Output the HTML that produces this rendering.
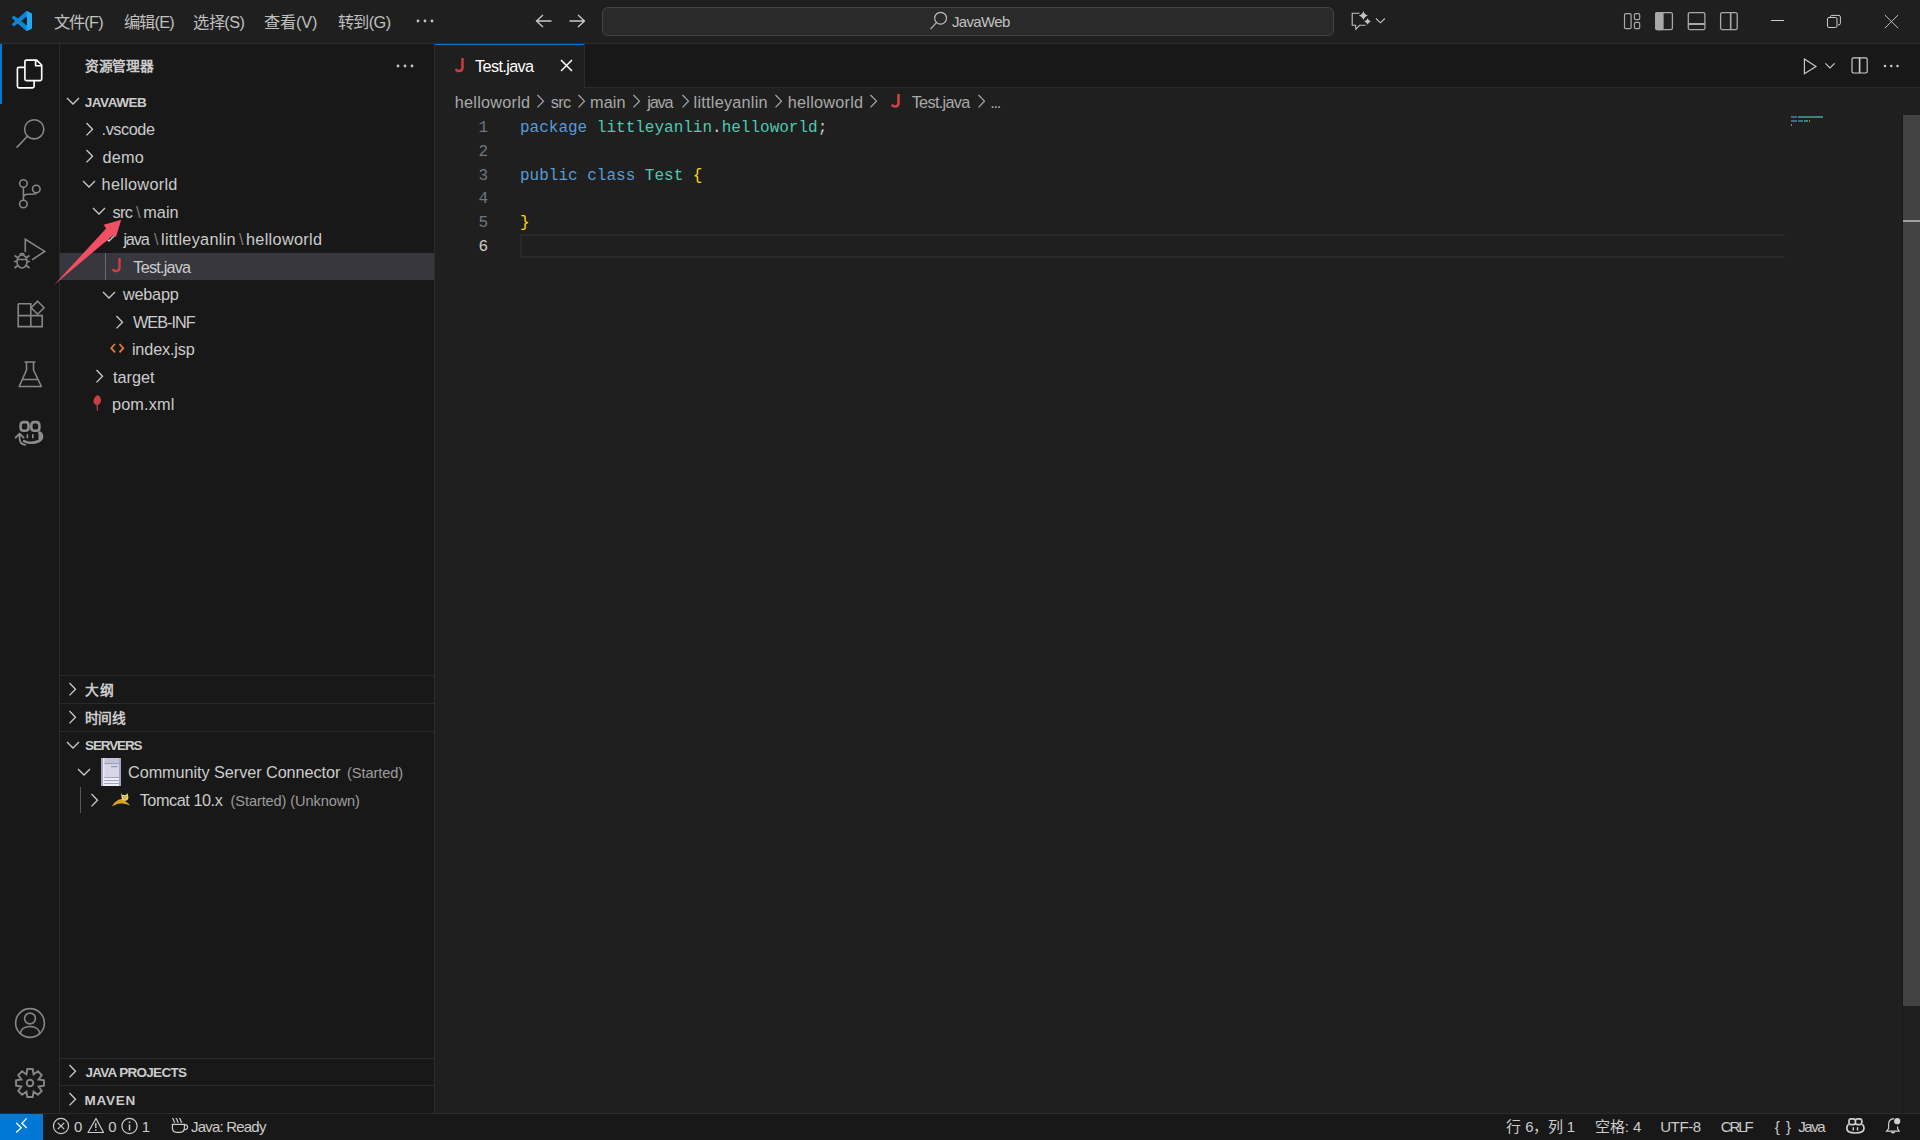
<!DOCTYPE html>
<html lang="zh-CN">
<head>
<meta charset="utf-8">
<style>
html,body{margin:0;padding:0;}
body{width:1920px;height:1140px;overflow:hidden;position:relative;background:#1f1f1f;font-family:"Liberation Sans",sans-serif;color:#cccccc;}
.a{position:absolute;}
.t{position:absolute;white-space:pre;font-family:"Liberation Sans",sans-serif;}
.mono{font-family:"Liberation Mono",monospace;}
svg{position:absolute;overflow:visible;}
</style>
</head>
<body>
<!-- title bar -->
<div class="a" style="left:0;top:0;width:1920px;height:43px;background:#1f1f1f"></div>
<div class="a" style="left:0;top:43px;width:1920px;height:1px;background:#2b2b2b"></div>
<!-- activity bar -->
<div class="a" style="left:0;top:44px;width:59px;height:1069px;background:#181818"></div>
<div class="a" style="left:59px;top:44px;width:1px;height:1069px;background:#2b2b2b"></div>
<div class="a" style="left:0;top:44px;width:2px;height:60px;background:#0078d4"></div>
<!-- sidebar -->
<div class="a" style="left:60px;top:44px;width:374px;height:1069px;background:#181818"></div>
<div class="a" style="left:434px;top:44px;width:1px;height:1069px;background:#2b2b2b"></div>
<!-- selected row -->
<div class="a" style="left:60px;top:253px;width:374px;height:27px;background:#37373d"></div>
<div class="a" style="left:105px;top:253px;width:1px;height:27px;background:#6b6b6b"></div>
<!-- section borders -->
<div class="a" style="left:60px;top:675px;width:374px;height:1px;background:#2b2b2b"></div>
<div class="a" style="left:60px;top:703px;width:374px;height:1px;background:#2b2b2b"></div>
<div class="a" style="left:60px;top:731px;width:374px;height:1px;background:#2b2b2b"></div>
<div class="a" style="left:60px;top:1058px;width:374px;height:1px;background:#2b2b2b"></div>
<div class="a" style="left:60px;top:1085px;width:374px;height:1px;background:#2b2b2b"></div>
<div class="a" style="left:80px;top:787px;width:1px;height:26px;background:#585858"></div>
<!-- tab bar -->
<div class="a" style="left:435px;top:44px;width:1485px;height:43px;background:#181818"></div>
<div class="a" style="left:435px;top:87px;width:1485px;height:1px;background:#2b2b2b"></div>
<div class="a" style="left:435px;top:44px;width:149px;height:44px;background:#1f1f1f"></div>
<div class="a" style="left:435px;top:44px;width:149px;height:1px;background:#0078d4"></div>
<div class="a" style="left:584px;top:44px;width:1px;height:43px;background:#2b2b2b"></div>
<!-- status bar -->
<div class="a" style="left:0;top:1113px;width:1920px;height:27px;background:#181818"></div>
<div class="a" style="left:0;top:1113px;width:1920px;height:1px;background:#2b2b2b"></div>
<div class="a" style="left:0;top:1114px;width:43px;height:26px;background:#0078d4"></div>
<!-- command center -->
<div class="a" style="left:602px;top:7px;width:730px;height:27px;background:#2a2a2a;border:1px solid #444444;border-radius:6px"></div>
<!-- editor -->
<div class="a" style="left:520px;top:234px;width:1263px;height:20px;border:2px solid #282828;border-right:none"></div>
<!-- scrollbar -->
<div class="a" style="left:1903px;top:115px;width:17px;height:891px;background:#434343"></div>
<div class="a" style="left:1903px;top:220px;width:17px;height:2px;background:#a0a0a0"></div>
<div class="a" style="left:1902px;top:115px;width:1px;height:998px;background:#171717"></div>

<!-- code -->
<div class="t mono" style="left:478px;top:117px;font-size:16px;line-height:23.75px;color:#6e7681;text-align:right;width:10px">1<br>2<br>3<br>4<br>5<br><span style="color:#cccccc">6</span></div>
<div class="t mono" style="left:520px;top:117px;font-size:16px;line-height:23.75px;color:#cccccc"><span style="color:#569cd6">package</span> <span style="color:#4ec9b0">littleyanlin</span>.<span style="color:#4ec9b0">helloworld</span>;<br><br><span style="color:#569cd6">public</span> <span style="color:#569cd6">class</span> <span style="color:#4ec9b0">Test</span> <span style="color:#ffd700">{</span><br><br><span style="color:#ffd700">}</span><br></div>
<!-- minimap -->
<div class="a" style="left:1791px;top:116px;width:40px;height:10px;opacity:0.6">
<div class="a" style="left:0;top:0;width:6px;height:2px;background:#569cd6"></div>
<div class="a" style="left:7px;top:0;width:25px;height:2px;background:#4ec9b0"></div>
<div class="a" style="left:0;top:4px;width:6px;height:2px;background:#569cd6"></div>
<div class="a" style="left:7px;top:4px;width:5px;height:2px;background:#569cd6"></div>
<div class="a" style="left:13px;top:4px;width:4px;height:2px;background:#4ec9b0"></div>
<div class="a" style="left:18px;top:4px;width:1px;height:2px;background:#ffd700"></div>
<div class="a" style="left:0;top:8px;width:1px;height:2px;background:#cccccc"></div>
</div>
<span id="m1" class="t" style="left:53.60px;top:11.50px;font-size:16.25px;line-height:20px;letter-spacing:-0.650px;color:#c0c0c0;font-weight:400;">文件(F)</span>
<span id="m2" class="t" style="left:124.00px;top:11.50px;font-size:16.25px;line-height:20px;letter-spacing:-0.750px;color:#c0c0c0;font-weight:400;">编辑(E)</span>
<span id="m3" class="t" style="left:193.20px;top:11.50px;font-size:16.25px;line-height:20px;letter-spacing:-0.475px;color:#c0c0c0;font-weight:400;">选择(S)</span>
<span id="m4" class="t" style="left:264.30px;top:11.50px;font-size:16.25px;line-height:20px;letter-spacing:-0.125px;color:#c0c0c0;font-weight:400;">查看(V)</span>
<span id="m5" class="t" style="left:337.75px;top:11.50px;font-size:16.25px;line-height:20px;letter-spacing:-0.537px;color:#c0c0c0;font-weight:400;">转到(G)</span>
<span id="cc" class="t" style="left:952.00px;top:12.00px;font-size:15px;line-height:19px;letter-spacing:-0.667px;color:#c2c2c2;font-weight:400;">JavaWeb</span>
<span id="sbt" class="t" style="left:84.75px;top:57.50px;font-size:13.75px;line-height:17px;letter-spacing:-0.188px;color:#cccccc;font-weight:700;">资源管理器</span>
<span id="jw" class="t" style="left:84.75px;top:94.40px;font-size:13.5px;line-height:17px;letter-spacing:-0.458px;color:#cccccc;font-weight:700;">JAVAWEB</span>
<span id="t1" class="t" style="left:101.60px;top:119.00px;font-size:16.25px;line-height:20px;letter-spacing:-0.433px;color:#cccccc;font-weight:400;">.vscode</span>
<span id="t2" class="t" style="left:102.60px;top:146.80px;font-size:16.25px;line-height:20px;letter-spacing:0.200px;color:#cccccc;font-weight:400;">demo</span>
<span id="t3" class="t" style="left:101.60px;top:174.10px;font-size:16.25px;line-height:20px;letter-spacing:0.289px;color:#cccccc;font-weight:400;">helloworld</span>
<span id="t4a" class="t" style="left:112.50px;top:202.20px;font-size:16.25px;line-height:20px;letter-spacing:-0.600px;color:#cccccc;font-weight:400;">src</span>
<span id="t4b" class="t" style="left:136.00px;top:202.20px;font-size:16.25px;line-height:20px;letter-spacing:0.000px;color:#7a7a7a;font-weight:400;">\</span>
<span id="t4c" class="t" style="left:143.20px;top:202.20px;font-size:16.25px;line-height:20px;letter-spacing:0.067px;color:#cccccc;font-weight:400;">main</span>
<span id="t5a" class="t" style="left:123.40px;top:229.00px;font-size:16.25px;line-height:20px;letter-spacing:-1.133px;color:#cccccc;font-weight:400;">java</span>
<span id="t5b" class="t" style="left:154.00px;top:229.00px;font-size:16.25px;line-height:20px;letter-spacing:0.000px;color:#7a7a7a;font-weight:400;">\</span>
<span id="t5c" class="t" style="left:161.00px;top:229.00px;font-size:16.25px;line-height:20px;letter-spacing:0.291px;color:#cccccc;font-weight:400;">littleyanlin</span>
<span id="t5d" class="t" style="left:239.00px;top:229.00px;font-size:16.25px;line-height:20px;letter-spacing:0.000px;color:#7a7a7a;font-weight:400;">\</span>
<span id="t5e" class="t" style="left:246.00px;top:229.00px;font-size:16.25px;line-height:20px;letter-spacing:0.311px;color:#cccccc;font-weight:400;">helloworld</span>
<span id="t6" class="t" style="left:133.30px;top:256.90px;font-size:16.25px;line-height:20px;letter-spacing:-0.788px;color:#cccccc;font-weight:400;">Test.java</span>
<span id="t7" class="t" style="left:123.00px;top:284.00px;font-size:16.25px;line-height:20px;letter-spacing:-0.240px;color:#cccccc;font-weight:400;">webapp</span>
<span id="t8" class="t" style="left:132.90px;top:311.70px;font-size:16.25px;line-height:20px;letter-spacing:-0.950px;color:#cccccc;font-weight:400;">WEB-INF</span>
<span id="t9" class="t" style="left:131.90px;top:338.50px;font-size:16.25px;line-height:20px;letter-spacing:-0.150px;color:#cccccc;font-weight:400;">index.jsp</span>
<span id="t10" class="t" style="left:113.00px;top:367.20px;font-size:16.25px;line-height:20px;letter-spacing:0.000px;color:#cccccc;font-weight:400;">target</span>
<span id="t11" class="t" style="left:112.00px;top:394.00px;font-size:16.25px;line-height:20px;letter-spacing:0.150px;color:#cccccc;font-weight:400;">pom.xml</span>
<span id="dg" class="t" style="left:84.80px;top:682.00px;font-size:13.75px;line-height:17px;letter-spacing:0.800px;color:#cccccc;font-weight:700;">大纲</span>
<span id="sjx" class="t" style="left:84.80px;top:709.50px;font-size:13.75px;line-height:17px;letter-spacing:-0.400px;color:#cccccc;font-weight:700;">时间线</span>
<span id="srv" class="t" style="left:85.00px;top:736.60px;font-size:13.5px;line-height:17px;letter-spacing:-1.117px;color:#cccccc;font-weight:700;">SERVERS</span>
<span id="csc" class="t" style="left:128.00px;top:762.00px;font-size:16.25px;line-height:20px;letter-spacing:-0.064px;color:#cccccc;font-weight:400;">Community Server Connector</span>
<span id="csc2" class="t" style="left:347.00px;top:764.00px;font-size:14.6px;line-height:18px;letter-spacing:-0.075px;color:#9d9d9d;font-weight:400;">(Started)</span>
<span id="tc" class="t" style="left:139.70px;top:790.00px;font-size:16.25px;line-height:20px;letter-spacing:-0.450px;color:#cccccc;font-weight:400;">Tomcat 10.x</span>
<span id="tc2" class="t" style="left:230.60px;top:792.00px;font-size:14.6px;line-height:18px;letter-spacing:-0.111px;color:#9d9d9d;font-weight:400;">(Started) (Unknown)</span>
<span id="jp" class="t" style="left:85.40px;top:1063.70px;font-size:13.5px;line-height:17px;letter-spacing:-0.700px;color:#cccccc;font-weight:700;">JAVA PROJECTS</span>
<span id="mv" class="t" style="left:84.40px;top:1091.80px;font-size:13.5px;line-height:17px;letter-spacing:0.750px;color:#cccccc;font-weight:700;">MAVEN</span>
<span id="tab" class="t" style="left:475.00px;top:55.90px;font-size:16.25px;line-height:20px;letter-spacing:-0.625px;color:#ffffff;font-weight:400;">Test.java</span>
<span id="b1" class="t" style="left:454.80px;top:91.75px;font-size:16.25px;line-height:20px;letter-spacing:0.244px;color:#a9a9a9;font-weight:400;">helloworld</span>
<span id="b2" class="t" style="left:550.80px;top:91.75px;font-size:16.25px;line-height:20px;letter-spacing:-0.700px;color:#a9a9a9;font-weight:400;">src</span>
<span id="b3" class="t" style="left:590.10px;top:91.75px;font-size:16.25px;line-height:20px;letter-spacing:0.033px;color:#a9a9a9;font-weight:400;">main</span>
<span id="b4" class="t" style="left:647.20px;top:91.75px;font-size:16.25px;line-height:20px;letter-spacing:-1.133px;color:#a9a9a9;font-weight:400;">java</span>
<span id="b5" class="t" style="left:693.60px;top:91.75px;font-size:16.25px;line-height:20px;letter-spacing:0.236px;color:#a9a9a9;font-weight:400;">littleyanlin</span>
<span id="b6" class="t" style="left:787.80px;top:91.75px;font-size:16.25px;line-height:20px;letter-spacing:0.244px;color:#a9a9a9;font-weight:400;">helloworld</span>
<span id="b7" class="t" style="left:911.70px;top:91.75px;font-size:16.25px;line-height:20px;letter-spacing:-0.688px;color:#a9a9a9;font-weight:400;">Test.java</span>
<span id="b8" class="t" style="left:990.20px;top:91.75px;font-size:16.25px;line-height:20px;letter-spacing:-1.200px;color:#a9a9a9;font-weight:400;">...</span>
<span id="s0a" class="t" style="left:74.00px;top:1117.20px;font-size:15px;line-height:19px;letter-spacing:-0.200px;color:#cccccc;font-weight:400;">0</span>
<span id="s0b" class="t" style="left:108.30px;top:1117.20px;font-size:15px;line-height:19px;letter-spacing:-0.300px;color:#cccccc;font-weight:400;">0</span>
<span id="s1" class="t" style="left:141.70px;top:1117.20px;font-size:15px;line-height:19px;letter-spacing:-0.700px;color:#cccccc;font-weight:400;">1</span>
<span id="sjr" class="t" style="left:191.00px;top:1117.20px;font-size:15px;line-height:19px;letter-spacing:-0.800px;color:#cccccc;font-weight:400;">Java: Ready</span>
<span id="sln" class="t" style="left:1506.40px;top:1117.20px;font-size:15px;line-height:19px;letter-spacing:-0.200px;color:#cccccc;font-weight:400;">行 6，列 1</span>
<span id="ssp" class="t" style="left:1594.80px;top:1117.20px;font-size:15px;line-height:19px;letter-spacing:-0.025px;color:#cccccc;font-weight:400;">空格: 4</span>
<span id="sut" class="t" style="left:1660.20px;top:1117.20px;font-size:15px;line-height:19px;letter-spacing:-0.400px;color:#cccccc;font-weight:400;">UTF-8</span>
<span id="scr" class="t" style="left:1720.80px;top:1117.20px;font-size:15px;line-height:19px;letter-spacing:-2.133px;color:#cccccc;font-weight:400;">CRLF</span>
<span id="sbr" class="t" style="left:1774.70px;top:1117.20px;font-size:15px;line-height:19px;letter-spacing:1.050px;color:#cccccc;font-weight:400;">{ }</span>
<span id="sjv" class="t" style="left:1798.30px;top:1117.20px;font-size:15px;line-height:19px;letter-spacing:-1.467px;color:#cccccc;font-weight:400;">Java</span>

<!-- ICONS -->
<!-- vscode logo -->
<svg style="left:12px;top:11px" width="20" height="20" viewBox="0 0 100 100">
  <defs><clipPath id="vsc"><path d="M96.46 10.8 L75.86 0.87 a6.23 6.23 0 0 0 -7.11 1.21 L29.33 38.04 L12.15 25 a4.16 4.16 0 0 0 -5.32 .24 L1.32 30.25 a4.17 4.17 0 0 0 0 6.16 L16.22 50 L1.32 63.59 a4.17 4.17 0 0 0 0 6.16 l5.51 5 a4.16 4.16 0 0 0 5.32 .24 l17.18 -13.04 l39.42 35.96 a6.22 6.22 0 0 0 7.11 1.21 l20.6 -9.92 a6.25 6.25 0 0 0 3.54 -5.63 V16.43 a6.25 6.25 0 0 0 -3.54 -5.63 Z M75 72.7 L45.11 50 L75 27.3 Z"/></clipPath></defs>
  <g clip-path="url(#vsc)"><rect x="0" y="0" width="100" height="100" fill="#0a85d9"/><rect x="73" y="0" width="30" height="100" fill="#23a9f2"/><path d="M0 30 L75 87 L75 100 L0 45 Z" fill="#0e8fe0" opacity="0.5"/></g>
</svg>
<!-- ellipsis menu -->
<svg style="left:416px;top:19px" width="18" height="4"><circle cx="2" cy="2" r="1.4" fill="#c4c4c4"/><circle cx="9" cy="2" r="1.4" fill="#c4c4c4"/><circle cx="16" cy="2" r="1.4" fill="#c4c4c4"/></svg>
<!-- nav arrows -->
<svg style="left:534px;top:13px" width="20" height="16" viewBox="0 0 20 16" fill="none" stroke="#cccccc" stroke-width="1.3"><path d="M9 2 L2.5 8 L9 14 M2.5 8 H17.5"/></svg>
<svg style="left:567px;top:13px" width="20" height="16" viewBox="0 0 20 16" fill="none" stroke="#cccccc" stroke-width="1.3"><path d="M11 2 L17.5 8 L11 14 M17.5 8 H2.5"/></svg>
<!-- search icon in command center -->
<svg style="left:920px;top:0" width="30" height="40" viewBox="920 0 30 40" fill="none" stroke="#bdbdbd" stroke-width="1.15"><circle cx="940.6" cy="18.2" r="5.9"/><path d="M936.4 22.6 L930.6 29.2"/></svg>
<!-- copilot chat icon -->
<svg style="left:1340px;top:0" width="60" height="44" viewBox="1340 0 60 44" fill="none" stroke="#c4c4c4" stroke-width="1.1"><path d="M1359.5 13.2 H1352.2 V25.3 H1355.6 L1355.9 29.3 L1359.6 25.3 H1365.5"/><path d="M1363.4 10.9 Q1364.412 14.488 1368.0 15.5 Q1364.412 16.512 1363.4 20.1 Q1362.3880000000001 16.512 1358.8000000000002 15.5 Q1362.3880000000001 14.488 1363.4 10.9 Z" fill="#c4c4c4" stroke="none"/><path d="M1367.6 18.2 Q1368.326 20.774 1370.8999999999999 21.5 Q1368.326 22.226 1367.6 24.8 Q1366.8739999999998 22.226 1364.3 21.5 Q1366.8739999999998 20.774 1367.6 18.2 Z" fill="#c4c4c4" stroke="none"/><path d="M1376 18.5 L1380.4 22.8 L1384.8 18.5"/></svg>
<!-- layout icons -->
<svg style="left:1622px;top:11px" width="20" height="20" viewBox="0 0 20 20" fill="none" stroke="#a8a8a8" stroke-width="1.2">
  <rect x="2.5" y="2.6" width="6.6" height="15" rx="1.3"/><rect x="12.4" y="2.6" width="5.3" height="6" rx="1.3"/><rect x="12.4" y="11.4" width="5.3" height="6.2" rx="1.3"/></svg>
<svg style="left:1654px;top:11px" width="20" height="20" viewBox="0 0 20 20" fill="none" stroke="#a8a8a8" stroke-width="1.3">
  <rect x="1.8" y="1.6" width="16.6" height="17" rx="1.6"/><rect x="1.8" y="1.6" width="7.2" height="17" rx="1" fill="#a8a8a8"/></svg>
<svg style="left:1687px;top:11px" width="20" height="20" viewBox="0 0 20 20" fill="none" stroke="#a8a8a8" stroke-width="1.3">
  <rect x="1.3" y="1.6" width="16.6" height="17" rx="1.6"/><path d="M1.3 13 H17.9" stroke-width="2"/></svg>
<svg style="left:1719px;top:11px" width="20" height="20" viewBox="0 0 20 20" fill="none" stroke="#a8a8a8" stroke-width="1.3">
  <rect x="1.6" y="1.6" width="16.6" height="17" rx="1.6"/><path d="M11.7 1.6 V18.6" stroke-width="1.6"/></svg>
<!-- window controls -->
<div class="a" style="left:1771px;top:20px;width:13px;height:1px;background:#cccccc"></div>
<svg style="left:1826px;top:13px" width="16" height="16" viewBox="0 0 16 16" fill="none" stroke="#cccccc" stroke-width="1"><rect x="1.5" y="4.5" width="9.5" height="10" rx="1.5"/><path d="M4.3 3.9 A1.5 1.5 0 0 1 5.8 2.4 H12.9 A1.5 1.5 0 0 1 14.4 3.9 V10.3 A1.5 1.5 0 0 1 12.9 11.8 H12"/></svg>
<svg style="left:1884px;top:14px" width="15" height="15" viewBox="0 0 15 15" fill="none" stroke="#c8c8c8" stroke-width="0.95"><path d="M0.9 1 L14.1 14.2 M14.1 1 L0.9 14.2"/></svg>

<!-- activity bar icons -->
<svg style="left:12px;top:55px" width="36" height="36" viewBox="0 0 36 36" fill="none" stroke="#ffffff" stroke-width="1.65" stroke-linejoin="round"><path d="M14.4 5.05 H24.6 L29.7 10 V24.1 Q29.7 25.6 28.2 25.6 H14.4 Q12.9 25.6 12.9 24.1 V6.55 Q12.9 5.05 14.4 5.05 Z"/><path d="M23.6 5.3 V10.7 H29.5"/><path d="M12.9 12.3 H6.9 Q5.4 12.3 5.4 13.8 V31.3 Q5.4 32.8 6.9 32.8 H20.6 Q22.1 32.8 22.1 31.3 V25.6"/></svg>
<svg style="left:0;top:104px" width="60" height="60" viewBox="0 104 60 60" fill="none" stroke="#868686" stroke-width="1.6"><circle cx="34.2" cy="129.3" r="9.6"/><path d="M27.4 136.2 L16.6 147.6"/></svg>
<svg style="left:15px;top:178px" width="30" height="32" viewBox="0 0 30 32" fill="none" stroke="#868686" stroke-width="1.6"><circle cx="8.4" cy="5.5" r="3.8"/><circle cx="8.4" cy="26" r="3.8"/><circle cx="21.3" cy="11" r="3.8"/><path d="M8.4 9.3 V22.2 M8.4 19.5 Q8.4 16.2 13 16.2 H17 Q21.3 16.2 21.3 14.8"/></svg>
<svg style="left:14px;top:238px" width="34" height="34" viewBox="0 0 34 34" fill="none" stroke="#868686" stroke-width="1.6"><path d="M11.3 14 V1.3 L30.7 13.4 L18 21.8"/><ellipse cx="8" cy="23.5" rx="5" ry="6.5"/><path d="M3 21.5 H13 M0.5 17.5 L3.5 19.5 M15.5 17.5 L12.5 19.5 M0 23.5 H3 M13 23.5 H16 M0.5 30 L3.8 27.5 M15.5 30 L12.2 27.5 M5.5 16.5 Q8 14.5 10.5 16.5"/></svg>
<svg style="left:16px;top:300px" width="30" height="30" viewBox="0 0 30 30" fill="none" stroke="#868686" stroke-width="1.6"><path d="M2.2 3.7 H14.8 V15.6 M2.2 3.7 V26.6 H26.2 V15.6 H2.2 M14.8 15.6 V26.6"/><path d="M21.6 1.2 L28.1 7.7 L21.6 14.2 L15.1 7.7 Z"/></svg>
<svg style="left:17px;top:360px" width="28" height="30" viewBox="0 0 28 30" fill="none" stroke="#868686" stroke-width="1.6" stroke-linejoin="round"><path d="M7.5 2 H18.5 M9.5 2 V10 L2.2 26.5 H24.4 L16.5 10 V2 M5.5 19.5 H20.9"/></svg>
<svg style="left:12px;top:416px" width="36" height="36" viewBox="0 0 36 36" fill="none" stroke="#8c8c8c" stroke-width="2.6" stroke-linecap="round" stroke-linejoin="round"><path d="M11.5 6.1 H14 Q16.5 6.1 16.5 9.5 V11.8 Q16.5 14.8 13.2 14.8 H11.5 Q8.6 14.8 8.6 11.8 V9.5 Q8.6 6.1 11.5 6.1 Z"/><path d="M22 6.1 H24.5 Q27.4 6.1 27.4 9.5 V11.8 Q27.4 14.8 24.5 14.8 H22.5 Q19.3 14.8 19.3 11.8 V9.5 Q19.3 6.1 22 6.1 Z"/><path d="M27.4 16.5 Q30 17.5 30 20.5 Q30 23.5 27 25 Q23 27 17.5 26.7 Q14 26.5 12 25"/><path d="M15.4 18.7 V21.8 M20.8 18.7 V21.8" stroke-width="1.6"/><path d="M28 16.5 Q30.5 18 30.5 20.5 V22.5 L26.5 24 V16 Z" fill="#8c8c8c" stroke="none"/><path d="M13.3 28.8 Q7.6 28.2 7.6 22.5 V18 M3.6 21.6 L7.6 17.6 L11.6 21.6" stroke-width="1.8"/></svg>
<svg style="left:14px;top:1007px" width="32" height="32" viewBox="0 0 32 32" fill="none" stroke="#868686" stroke-width="1.6"><circle cx="16" cy="16" r="14.4"/><circle cx="16" cy="11.5" r="5.4"/><path d="M6.2 26.5 Q7.5 19.5 16 19.5 Q24.5 19.5 25.8 26.5"/></svg>
<svg style="left:14px;top:1067px" width="32" height="32" viewBox="0 0 32 32" fill="none" stroke="#868686" stroke-width="1.9" stroke-linejoin="miter"><path d="M13.29 2.06 L18.71 2.06 L19.56 7.41 L23.94 4.23 L27.77 8.06 L24.59 12.44 L29.94 13.29 L29.94 18.71 L24.59 19.56 L27.77 23.94 L23.94 27.77 L19.56 24.59 L18.71 29.94 L13.29 29.94 L12.44 24.59 L8.06 27.77 L4.23 23.94 L7.41 19.56 L2.06 18.71 L2.06 13.29 L7.41 12.44 L4.23 8.06 L8.06 4.23 L12.44 7.41 Z"/><circle cx="16" cy="16" r="3.3"/></svg>

<!-- sidebar icons -->
<svg style="left:396px;top:64px" width="18" height="4"><circle cx="2" cy="2" r="1.4" fill="#c4c4c4"/><circle cx="9" cy="2" r="1.4" fill="#c4c4c4"/><circle cx="16" cy="2" r="1.4" fill="#c4c4c4"/></svg>
<!-- chevrons: down (v) and right (>) -->
<svg style="left:66px;top:96px" width="14" height="10" viewBox="0 0 14 10" fill="none" stroke="#cccccc" stroke-width="1.3"><path d="M1 2 L7 8 L13 2"/></svg>
<svg style="left:85px;top:121.8px" width="9" height="15" viewBox="0 0 9 15" fill="none" stroke="#cccccc" stroke-width="1.3"><path d="M1.5 1 L7.5 7.2 L1.5 13.4"/></svg>
<svg style="left:85px;top:149px" width="9" height="15" viewBox="0 0 9 15" fill="none" stroke="#cccccc" stroke-width="1.3"><path d="M1.5 1 L7.5 7.2 L1.5 13.4"/></svg>
<svg style="left:82px;top:179px" width="14" height="10" viewBox="0 0 14 10" fill="none" stroke="#cccccc" stroke-width="1.3"><path d="M1 2 L7 8 L13 2"/></svg>
<svg style="left:92px;top:206px" width="14" height="10" viewBox="0 0 14 10" fill="none" stroke="#cccccc" stroke-width="1.3"><path d="M1 2 L7 8 L13 2"/></svg>
<svg style="left:102px;top:233px" width="14" height="10" viewBox="0 0 14 10" fill="none" stroke="#cccccc" stroke-width="1.3"><path d="M1 2 L7 8 L13 2"/></svg>
<svg style="left:102px;top:289.5px" width="14" height="10" viewBox="0 0 14 10" fill="none" stroke="#cccccc" stroke-width="1.3"><path d="M1 2 L7 8 L13 2"/></svg>
<svg style="left:115px;top:314.5px" width="9" height="15" viewBox="0 0 9 15" fill="none" stroke="#cccccc" stroke-width="1.3"><path d="M1.5 1 L7.5 7.2 L1.5 13.4"/></svg>
<svg style="left:95px;top:369px" width="9" height="15" viewBox="0 0 9 15" fill="none" stroke="#cccccc" stroke-width="1.3"><path d="M1.5 1 L7.5 7.2 L1.5 13.4"/></svg>
<svg style="left:68px;top:682px" width="9" height="15" viewBox="0 0 9 15" fill="none" stroke="#cccccc" stroke-width="1.3"><path d="M1.5 1 L7.5 7.2 L1.5 13.4"/></svg>
<svg style="left:68px;top:710px" width="9" height="15" viewBox="0 0 9 15" fill="none" stroke="#cccccc" stroke-width="1.3"><path d="M1.5 1 L7.5 7.2 L1.5 13.4"/></svg>
<svg style="left:66px;top:740px" width="14" height="10" viewBox="0 0 14 10" fill="none" stroke="#cccccc" stroke-width="1.3"><path d="M1 2 L7 8 L13 2"/></svg>
<svg style="left:77px;top:767px" width="14" height="10" viewBox="0 0 14 10" fill="none" stroke="#cccccc" stroke-width="1.3"><path d="M1 2 L7 8 L13 2"/></svg>
<svg style="left:90px;top:793px" width="9" height="15" viewBox="0 0 9 15" fill="none" stroke="#cccccc" stroke-width="1.3"><path d="M1.5 1 L7.5 7.2 L1.5 13.4"/></svg>
<svg style="left:68px;top:1064px" width="9" height="15" viewBox="0 0 9 15" fill="none" stroke="#cccccc" stroke-width="1.3"><path d="M1.5 1 L7.5 7.2 L1.5 13.4"/></svg>
<svg style="left:68px;top:1092px" width="9" height="15" viewBox="0 0 9 15" fill="none" stroke="#cccccc" stroke-width="1.3"><path d="M1.5 1 L7.5 7.2 L1.5 13.4"/></svg>
<!-- file icons -->
<svg style="left:112px;top:258px" width="11" height="15" viewBox="0 0 11 15" fill="none" stroke="#cc3e44" stroke-width="2.4" stroke-linecap="butt"><path d="M7.5 0 V9.5 Q7.5 13 4 13 Q1.5 13 0.8 11"/></svg>
<svg style="left:110px;top:343px" width="15" height="11" viewBox="0 0 15 11" fill="none" stroke="#e37933" stroke-width="1.8"><path d="M5 1 L1.2 5.2 L5 9.4 M9.5 1 L13.3 5.2 L9.5 9.4"/></svg>
<svg style="left:92px;top:394px" width="11" height="18" viewBox="0 0 11 18" fill="#cc3e44"><path d="M5.5 1 Q1 4 1.5 8 Q2 10.5 4.5 11 L5 17 L6 17 L5.8 11 Q9 10 9 6 Q9 2.5 5.5 1 Z"/></svg>
<!-- server icon -->
<svg style="left:101px;top:758px" width="20" height="28" viewBox="0 0 20 28">
  <rect x="0" y="0" width="20" height="28" fill="#d6d6e6"/>
  <rect x="0" y="0" width="20" height="5" fill="#c4c4d8"/>
  <rect x="0" y="0" width="2.2" height="28" fill="#a6a6c4"/><rect x="2.2" y="0" width="1.1" height="28" fill="#f2f2fa"/>
  <rect x="18" y="0" width="2" height="28" fill="#a6a6c4"/>
  <rect x="3.3" y="5" width="14.7" height="1.1" fill="#9c9cbe"/>
  <rect x="10" y="8.1" width="6.5" height="1.1" fill="#8e8eb6"/>
  <rect x="3.3" y="19" width="14.7" height="1.1" fill="#a2a2c2"/><rect x="3.3" y="20.1" width="14.7" height="1.9" fill="#eeeef6"/>
  <rect x="3.3" y="22" width="14.7" height="1.1" fill="#a2a2c2"/><rect x="3.3" y="23.1" width="14.7" height="1.9" fill="#eeeef6"/>
  <rect x="3.3" y="25" width="14.7" height="1.1" fill="#a2a2c2"/><rect x="3.3" y="26.1" width="14.7" height="1.9" fill="#eeeef6"/>
</svg>
<!-- tomcat icon -->
<svg style="left:110px;top:791px" width="22" height="17" viewBox="0 0 22 17">
  <path d="M2 15.5 Q4 11 8 9 Q11 7.5 13 8 L15 10 Q18 12 20.5 14.5 Q16 13 12.5 12.5 Q9 12 6 13.5 Q4 14.5 2 15.5 Z" fill="#d9a520"/>
  <path d="M11 2 L12.5 4 H16 L17.5 2 L18.5 6.5 Q18 9.5 15 10 Q12 9.5 11.5 6.5 Z" fill="#f0d36a"/>
  <path d="M13 5.8 h1.3 M15.3 5.8 h1.3 M14.2 7.6 h1.2" stroke="#7a5a10" stroke-width="0.8"/>
</svg>
<!-- tab icons -->
<svg style="left:455px;top:58px" width="11" height="15" viewBox="0 0 11 15" fill="none" stroke="#cc3e44" stroke-width="2.4"><path d="M7.5 0 V9.5 Q7.5 13 4 13 Q1.5 13 0.8 11"/></svg>
<svg style="left:560px;top:59px" width="13" height="13" viewBox="0 0 13 13" fill="none" stroke="#ffffff" stroke-width="1.5"><path d="M1 1 L12 12 M12 1 L1 12"/></svg>
<!-- breadcrumb chevrons -->
<svg style="left:536px;top:93.8px" width="10" height="15" viewBox="0 0 10 15" fill="none" stroke="#a9a9a9" stroke-width="1.2"><path d="M1.5 1 L7.5 7.2 L1.5 13.4"/></svg>
<svg style="left:577px;top:93.8px" width="10" height="15" viewBox="0 0 10 15" fill="none" stroke="#a9a9a9" stroke-width="1.2"><path d="M1.5 1 L7.5 7.2 L1.5 13.4"/></svg>
<svg style="left:632px;top:93.8px" width="10" height="15" viewBox="0 0 10 15" fill="none" stroke="#a9a9a9" stroke-width="1.2"><path d="M1.5 1 L7.5 7.2 L1.5 13.4"/></svg>
<svg style="left:681px;top:93.8px" width="10" height="15" viewBox="0 0 10 15" fill="none" stroke="#a9a9a9" stroke-width="1.2"><path d="M1.5 1 L7.5 7.2 L1.5 13.4"/></svg>
<svg style="left:774px;top:93.8px" width="10" height="15" viewBox="0 0 10 15" fill="none" stroke="#a9a9a9" stroke-width="1.2"><path d="M1.5 1 L7.5 7.2 L1.5 13.4"/></svg>
<svg style="left:869px;top:93.8px" width="10" height="15" viewBox="0 0 10 15" fill="none" stroke="#a9a9a9" stroke-width="1.2"><path d="M1.5 1 L7.5 7.2 L1.5 13.4"/></svg>
<svg style="left:977px;top:93.8px" width="10" height="15" viewBox="0 0 10 15" fill="none" stroke="#a9a9a9" stroke-width="1.2"><path d="M1.5 1 L7.5 7.2 L1.5 13.4"/></svg>
<svg style="left:891px;top:94px" width="11" height="15" viewBox="0 0 11 15" fill="none" stroke="#d6404a" stroke-width="2.5"><path d="M7.5 0 V9 Q7.5 12.5 4 12.5 Q1.8 12.5 1 10.5"/></svg>
<!-- editor toolbar -->
<svg style="left:1780px;top:44px" width="140" height="44" viewBox="1780 44 140 44" fill="none" stroke="#cccccc" stroke-width="1.15" stroke-linejoin="miter">
<path d="M1804.4 59 L1816 66.4 L1804.4 73.8 Z"/>
<path d="M1825.4 63.4 L1830 68 L1834.6 63.4"/>
<rect x="1852" y="57.8" width="15.2" height="15.2" rx="1.4"/><path d="M1859.6 57.8 V73" stroke-width="1.6"/>
<circle cx="1885" cy="66.1" r="1.25" fill="#cccccc" stroke="none"/><circle cx="1891.25" cy="66.1" r="1.25" fill="#cccccc" stroke="none"/><circle cx="1897.5" cy="66.1" r="1.25" fill="#cccccc" stroke="none"/>
</svg>

<!-- status bar icons -->
<svg style="left:0;top:1110px" width="43" height="30" viewBox="0 0 43 30" fill="none" stroke="#ffffff" stroke-width="1.3"><path d="M16.25 13 L21.25 17.8 L16.25 22.5 M26.7 8.4 L21.9 13.3 L26.7 18"/></svg>
<svg style="left:52px;top:1117px" width="18" height="18" viewBox="0 0 18 18" fill="none" stroke="#cccccc" stroke-width="1.2"><circle cx="9" cy="9" r="7.6"/><path d="M5.8 5.8 L12.2 12.2 M12.2 5.8 L5.8 12.2"/></svg>
<svg style="left:87px;top:1117px" width="18" height="18" viewBox="0 0 18 18" fill="none" stroke="#cccccc" stroke-width="1.2" stroke-linejoin="round"><path d="M9 1.5 L16.5 15.5 H1 Z"/><path d="M8.8 6 V11 M8.8 12.5 V13.8" stroke-width="1.4"/></svg>
<svg style="left:121px;top:1117px" width="18" height="18" viewBox="0 0 18 18" fill="none" stroke="#cccccc" stroke-width="1.2"><circle cx="8.5" cy="9" r="7.6"/><path d="M8.5 7.5 V13.5 M8.5 4.5 V6" stroke-width="1.5"/></svg>
<svg style="left:165px;top:1113px" width="30" height="27" viewBox="0 0 30 27" fill="none" stroke="#cccccc" stroke-width="1.2"><path d="M7.4 11.4 H19.4 V15 Q19.4 19.3 15 19.3 H11.8 Q7.4 19.3 7.4 15 Z"/><path d="M19.4 11.6 Q22.6 11.6 22.6 14 Q22.6 16.6 18.9 16.6"/><path d="M7.2 5.2 Q8.6 5.8 8.7 7.4 Q8.8 8.9 10 9.6 M10.7 5.2 Q12.1 5.8 12.2 7.4 Q12.3 8.9 13.5 9.6 M14.2 5.2 Q15.6 5.8 15.7 7.4 Q15.8 8.9 17 9.6"/></svg>
<svg style="left:1840px;top:1113px" width="30" height="27" viewBox="1840 1113 30 27" fill="none" stroke="#d0d0d0" stroke-width="1.7"><path d="M1849 1123 V1121 Q1849 1118.8 1851.3 1118.8 H1853 Q1855.4 1118.8 1855.4 1121 V1122.5 Q1855.4 1124.6 1853 1124.6 H1851.2 Q1849 1124.6 1849 1123 Z M1855.4 1123 V1121 Q1855.4 1118.8 1857.7 1118.8 H1859.5 Q1861.8 1118.8 1861.8 1121 V1122.5 Q1861.8 1124.6 1859.5 1124.6 H1857.7 Q1855.4 1124.6 1855.4 1123 Z"/><path d="M1848.5 1124.5 Q1846.8 1125.5 1846.8 1128.3 Q1846.8 1133 1855.4 1133 Q1864 1133 1864 1128.3 Q1864 1125.5 1862.3 1124.5"/><path d="M1853.3 1127.2 V1130.6 M1857.5 1127.2 V1130.6" stroke-width="1.4"/></svg>
<svg style="left:1880px;top:1113px" width="30" height="27" viewBox="1880 1113 30 27" fill="none" stroke="#d0d0d0" stroke-width="1.2"><path d="M1894 1118.6 Q1888.6 1119 1888.6 1124.5 V1128.5 L1886.6 1131.2 H1899.2 L1897.6 1128.8 V1126.4"/><path d="M1891.2 1131.6 Q1893 1134.2 1894.8 1131.6" stroke-width="1.3"/><circle cx="1897.2" cy="1121.2" r="3.1" fill="#d0d0d0" stroke="none"/></svg>

<!-- red annotation arrow -->
<svg style="left:0;top:0" width="200" height="300" viewBox="0 0 200 300"><path d="M121.2 219.8 L116 237 L113.5 234.9 L54.2 284.7 L106.1 228.6 L103.7 224.7 Z" fill="#f04f64"/></svg>
</body>
</html>
